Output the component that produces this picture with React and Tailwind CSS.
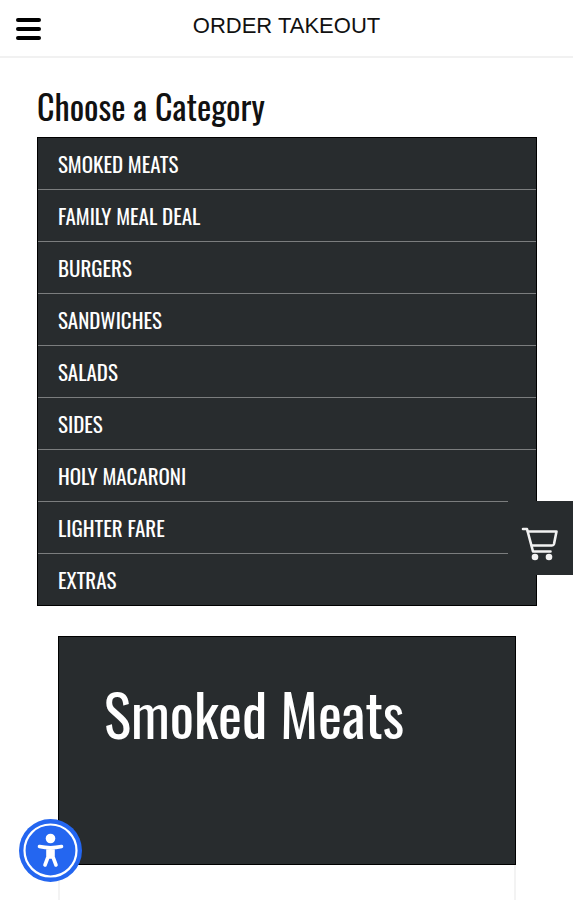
const categories = [
  'Smoked Meats',
  'Family Meal Deal',
  'Burgers',
  'Sandwiches',
  'Salads',
  'Sides',
  'Holy Macaroni',
  'Lighter Fare',
  'Extras',
];

function Header() {
  return (
    <header className="relative flex h-[58px] items-center justify-center border-b-2 border-[#f1f1f1] bg-white pb-1">
      <button type="button" aria-label="Open menu" className="absolute left-4 top-[18px] flex w-[25px] flex-col gap-[5px]">
        <span className="h-[4px] w-full rounded-xs bg-black" />
        <span className="h-[4px] w-full rounded-xs bg-black" />
        <span className="h-[4px] w-full rounded-xs bg-black" />
      </button>
      <h1 className="font-['Liberation_Sans',Arial,sans-serif] text-[22px] leading-7 text-[#111]">ORDER TAKEOUT</h1>
    </header>
  );
}

function CategoryMenu() {
  return (
    <section className="pt-6 pr-9 pl-[37px]">
      <h2 className="h-[55px] text-[34px] leading-12 text-[#111]">Choose a Category</h2>
      <nav aria-label="Categories">
        <ul className="divide-y divide-[#7b7d7e] border border-black bg-[#282c2e]">
          {categories.map((name) => (
            <li key={name}>
              <a href="#menu" className="flex h-[51px] items-center px-5 text-[21px] leading-7 text-white uppercase">
                {name}
              </a>
            </li>
          ))}
        </ul>
      </nav>
    </section>
  );
}

function CartButton() {
  return (
    <button type="button" aria-label="View cart" className="fixed right-0 top-[501px] flex h-[74px] w-[65px] items-center bg-[#282c2e] pt-3 pl-3">
      <svg viewBox="0 0 40 36" className="h-9 w-10" fill="none" stroke="#f2f2f2" strokeWidth="2.6" strokeLinecap="round" strokeLinejoin="round">
        <path d="M3 3h4L13 25.500h17.500" />
        <path d="M8 5.500H36.500l-2.500 12.500q-.4 1.500-2 1.500H12" />
        <circle cx="15" cy="31" r="3.300" fill="#f2f2f2" stroke="none" />
        <circle cx="29" cy="31" r="3.300" fill="#f2f2f2" stroke="none" />
      </svg>
    </button>
  );
}

function AccessibilityButton() {
  return (
    <button type="button" aria-label="Accessibility options" className="fixed bottom-[18px] left-[19px] size-[63px]">
      <svg viewBox="0 0 63 63" className="size-full">
        <circle cx="31.500" cy="31.500" r="31.500" fill="#2466f0" />
        <circle cx="31.500" cy="31.500" r="26" fill="none" stroke="#fff" strokeWidth="2.200" />
        <circle cx="31.500" cy="19.500" r="4.800" fill="#fff" />
        <path
          d="M20.500 27.500q5.500 1.200 11 1.200t11-1.200M29 29.500v8.500l-3 8M34 29.500v8.500l3 8M31.500 29v9"
          fill="none"
          stroke="#fff"
          strokeWidth="3.600"
          strokeLinecap="round"
          strokeLinejoin="round"
        />
      </svg>
    </button>
  );
}

export default function App() {
  return (
    <div className="h-screen overflow-hidden bg-white font-['Oswald','Liberation_Sans_Narrow',sans-serif]">
      <Header />
      <main>
        <CategoryMenu />
        <section id="menu" className="mt-[30px] mr-[57px] ml-[58px]">
          <div className="h-[229px] border border-black bg-[#282c2e] px-[45px] pt-10">
            <h2 className="text-[57px] leading-[72px] whitespace-nowrap text-white">Smoked Meats</h2>
          </div>
          <div className="h-60 border-x-2 border-[#f3f3f3]" />
        </section>
      </main>
      <CartButton />
      <AccessibilityButton />
    </div>
  );
}
